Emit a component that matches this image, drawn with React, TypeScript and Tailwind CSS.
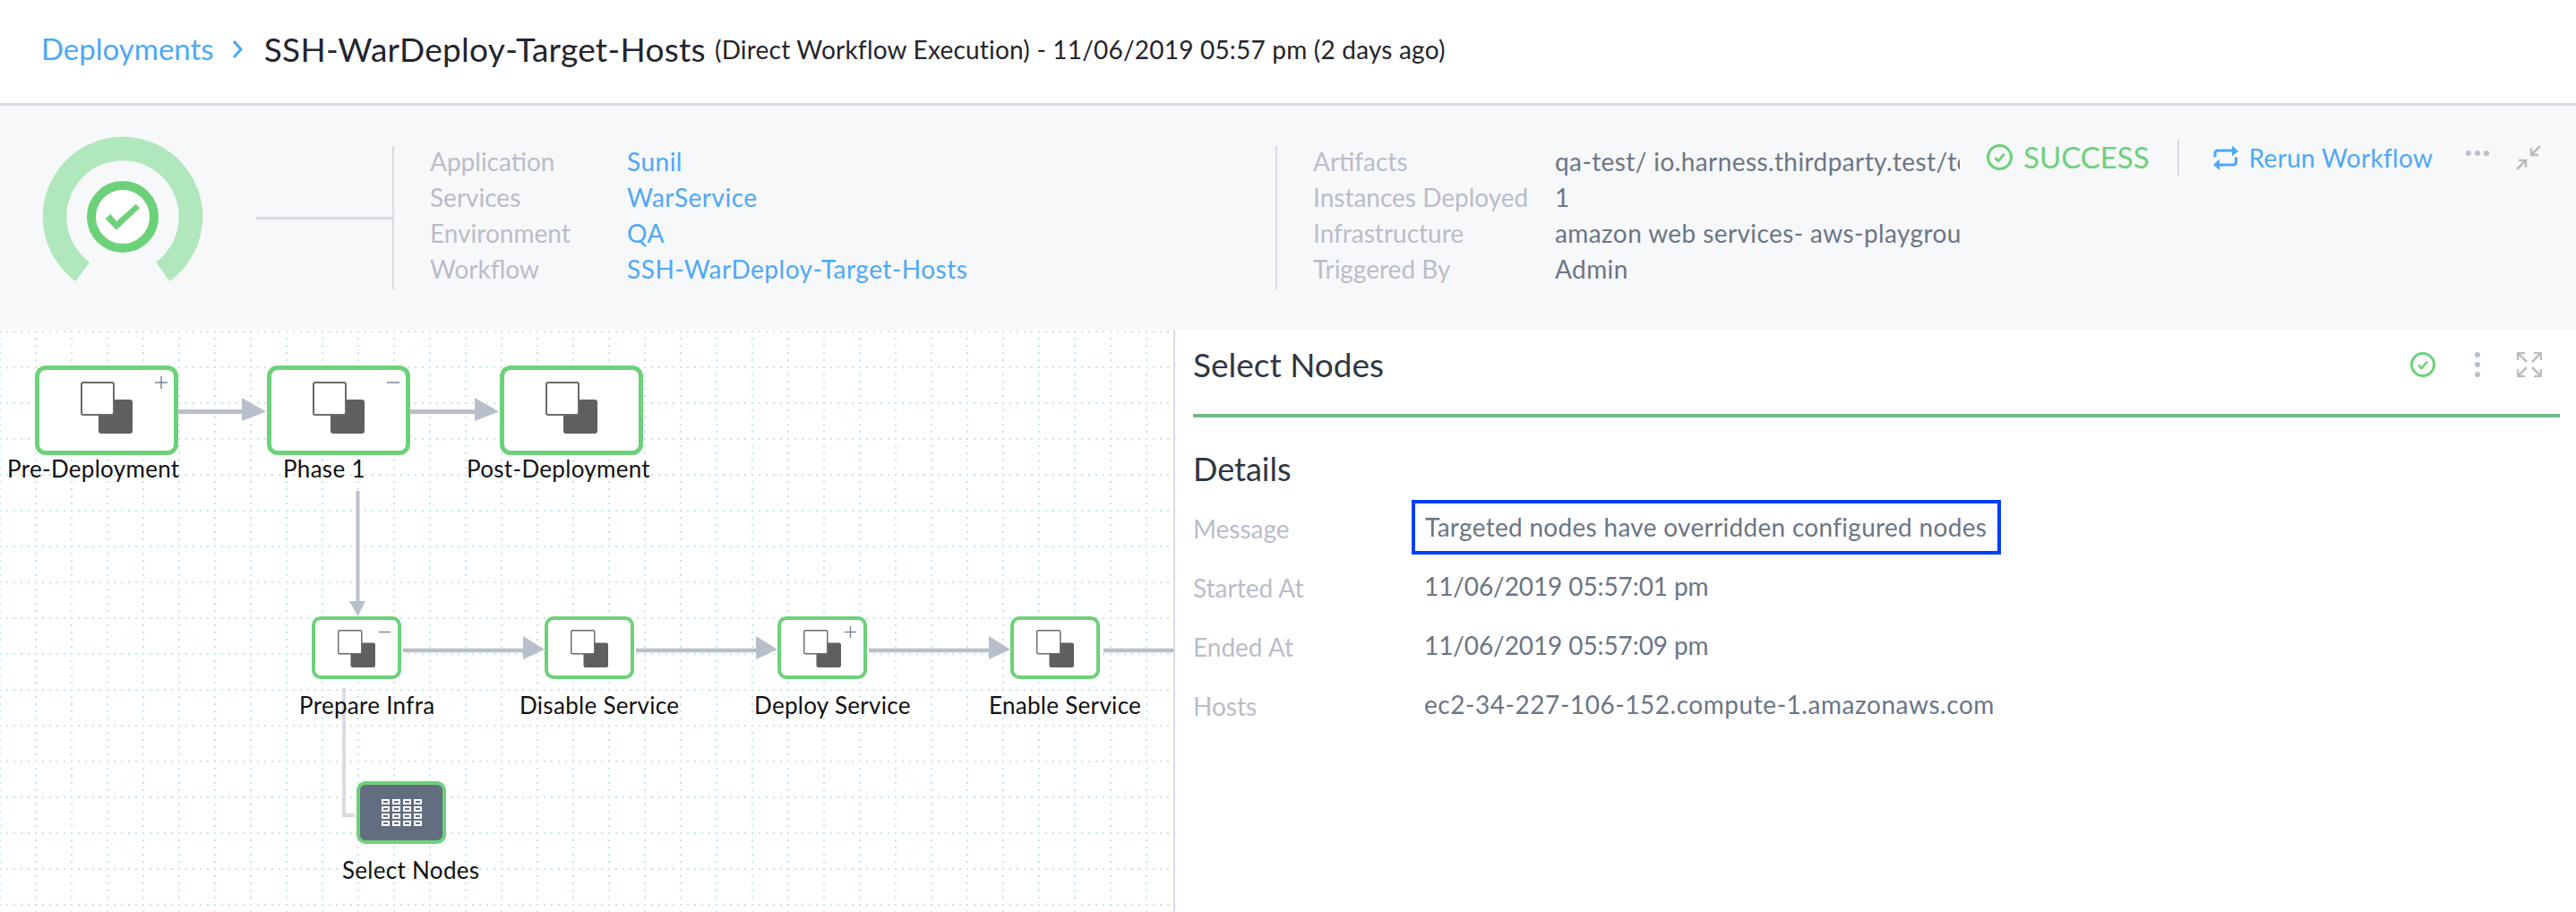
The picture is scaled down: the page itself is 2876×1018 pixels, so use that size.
import React from "react";

const infoLeft = [
  ["Application", "Sunil"],
  ["Services", "WarService"],
  ["Environment", "QA"],
  ["Workflow", "SSH-WarDeploy-Target-Hosts"],
];

const infoRight = [
  ["Artifacts", "qa-test/ io.harness.thirdparty.test/todolist-1.0.war (Build# 1)"],
  ["Instances Deployed", "1"],
  ["Infrastructure", "amazon web services- aws-playground-us-east-1"],
  ["Triggered By", "Admin"],
];

const bigNodes = [
  { pos: "left-[39px]", sign: "+" },
  { pos: "left-[298px]", sign: "-" },
  { pos: "left-[558px]", sign: "" },
];

const smallNodes = [
  { pos: "left-[348px]", sign: "-" },
  { pos: "left-[608px]", sign: "" },
  { pos: "left-[868px]", sign: "+" },
  { pos: "left-[1128px]", sign: "" },
];

const labels = [
  { text: "Pre-Deployment", pos: "left-[8px] top-[137px]" },
  { text: "Phase 1", pos: "left-[316px] top-[137px]" },
  { text: "Post-Deployment", pos: "left-[521px] top-[137px]" },
  { text: "Prepare Infra", pos: "left-[334px] top-[401px]" },
  { text: "Disable Service", pos: "left-[580px] top-[401px]" },
  { text: "Deploy Service", pos: "left-[842px] top-[401px]" },
  { text: "Enable Service", pos: "left-[1104px] top-[401px]" },
  { text: "Select Nodes", pos: "left-[382px] top-[585px]" },
];

const details = [
  ["Started At", "11/06/2019 05:57:01 pm", "tracking-[-0.1px]"],
  ["Ended At", "11/06/2019 05:57:09 pm", "tracking-[-0.1px]"],
  ["Hosts", "ec2-34-227-106-152.compute-1.amazonaws.com", "tracking-[0.55px]"],
];

function StackIcon({ className }: { className: string }) {
  return (
    <svg viewBox="0 0 58 58" className={className}>
      <rect x="20" y="20" width="38" height="38" rx="3" fill="#5f5f5f" />
      <rect x="1" y="1" width="36" height="36" rx="2" fill="#fff" stroke="#6a6a6a" strokeWidth="2" />
    </svg>
  );
}

function CheckCircle({ className }: { className: string }) {
  return (
    <svg viewBox="0 0 28 28" className={className} fill="none">
      <circle cx="14" cy="14" r="12.5" stroke="#6dd17a" strokeWidth="3" />
      <path d="M9 14.5l3.6 3.6L19 10.5" stroke="#6dd17a" strokeWidth="2.6" />
    </svg>
  );
}

function Sign({ sign, className }: { sign: string; className: string }) {
  if (!sign) return null;
  return (
    <svg viewBox="0 0 14 14" className={className} stroke="#6f7c96" strokeWidth="1.4">
      <path d="M0 7h14" />
      {sign === "+" && <path d="M7 0v14" />}
    </svg>
  );
}

function GraphLines() {
  return (
    <svg className="absolute inset-0 w-full h-full" fill="none">
      <defs>
        <pattern id="dots" x="39" y="1" width="40" height="40" patternUnits="userSpaceOnUse">
          <g fill="#bfe6f1">
            <rect x="0" y="0" width="2" height="2" />
            <rect x="8" y="0" width="2" height="2" />
            <rect x="16" y="0" width="2" height="2" />
            <rect x="24" y="0" width="2" height="2" />
            <rect x="32" y="0" width="2" height="2" />
            <rect x="0" y="8" width="2" height="2" />
            <rect x="0" y="16" width="2" height="2" />
            <rect x="0" y="24" width="2" height="2" />
            <rect x="0" y="32" width="2" height="2" />
          </g>
        </pattern>
      </defs>
      <rect width="100%" height="100%" fill="url(#dots)" />
      <g stroke="#b9bfca">
        <path d="M197 91.5H272" strokeWidth="5" />
        <path d="M458 91.5H532" strokeWidth="5" />
        <path d="M399.5 180V306" strokeWidth="4" />
        <path d="M450 358H586" strokeWidth="4.500" />
        <path d="M710 358H846" strokeWidth="4.500" />
        <path d="M970 358H1106" strokeWidth="4.500" />
        <path d="M1232 358H1310" strokeWidth="4.500" />
      </g>
      <g fill="#b9bfca">
        <path d="M270 76L297 91.5L270 102Z" />
        <path d="M530 76L557 91.5L530 102Z" />
        <path d="M390 303H408L399.5 320Z" />
        <path d="M584 342L608 357L584 368Z" />
        <path d="M844 342L868 357L844 368Z" />
        <path d="M1104 342L1128 357L1104 368Z" />
      </g>
      <path d="M384 400V542H396" stroke="#d9dae5" strokeWidth="4" />
    </svg>
  );
}

export default function App() {
  return (
    <div className="w-[2876px] h-[1018px] overflow-hidden bg-white flex flex-col font-[Lato,sans-serif]">
      <div className="h-[118px] shrink-0 border-b-[3px] border-[#d9dae5] flex items-center pl-[46px] pb-[6px] text-[#23252d]">
        <span className="text-[33px] text-[#4da8f5]">Deployments</span>
        <svg viewBox="0 0 12 22" className="w-[12px] h-[22px] ml-[20px] mr-[24px]" fill="none" stroke="#4da8f5" strokeWidth="3">
          <path d="M2 2l8 9-8 9" />
        </svg>
        <span className="text-[37px] tracking-[0.3px]">SSH-WarDeploy-Target-Hosts</span>
        <span className="text-[28px] tracking-[0.2px] ml-[10px]">(Direct Workflow Execution) - 11/06/2019 05:57 pm (2 days ago)</span>
      </div>

      <div className="h-[250px] shrink-0 bg-[#f7f8fa] flex items-center text-[28px] relative">
        <svg viewBox="0 0 180 170" className="w-[180px] h-[170px] ml-[47px] self-start mt-[34px] shrink-0" fill="none">
          <path d="M45.2 151.3A76 76 0 1 1 134.8 151.3" stroke="#b0e7bc" strokeWidth="26.5" />
          <circle cx="90" cy="90" r="35" fill="#fff" stroke="#6dd17a" strokeWidth="10" />
          <path d="M70.7 92.3L83 104.7L109 80.3L104.7 75.7L83 95.3L76.3 87Z" fill="#6dd17a" />
        </svg>
        <div className="w-[152px] h-[3px] ml-[59px] bg-[#d9dae5] shrink-0" />
        <div className="w-[986px] h-[160px] border-l-2 border-[#d9dae5] pl-[40px] shrink-0">
          <div className="-mt-[3px]">
            {infoLeft.map(([k, v]) => (
              <div key={k} className="flex h-[40px] items-center">
                <span className="w-[220px] text-[#b9bdc9]">{k}</span>
                <span className="text-[#4da8f5] tracking-[0.5px]">{v}</span>
              </div>
            ))}
          </div>
        </div>
        <div className="h-[160px] border-l-2 border-[#d9dae5] pl-[40px] shrink-0">
          <div className="-mt-[3px]">
            {infoRight.map(([k, v]) => (
              <div key={k} className="flex h-[40px] items-center">
                <span className="w-[270px] text-[#b9bdc9] whitespace-nowrap">{k}</span>
                <span className="w-[452px] text-[#6b7585] tracking-[0.4px] whitespace-nowrap overflow-hidden">{v}</span>
              </div>
            ))}
          </div>
        </div>
        <div className="flex items-center self-start mt-[33px] ml-[30px]">
          <CheckCircle className="w-[29px] h-[29px]" />
          <span className="text-[33px] text-[#6dd17a] ml-[12px]">SUCCESS</span>
          <div className="w-[2px] h-[40px] bg-[#d9dae5] ml-[31px]" />
          <svg viewBox="0 0 28 28" className="w-[28px] h-[28px] ml-[38px]" fill="none" stroke="#4da8f5" strokeWidth="3">
            <path d="M2 13.500V9a3 3 0 0 1 3-3h17" />
            <path d="M25.500 13.500V19a3 3 0 0 1-3 3H6" />
            <path d="M21 0.500L28 6.500L21 12.500Z" fill="#4da8f5" stroke="none" />
            <path d="M7 15.500L0 22L7 28Z" fill="#4da8f5" stroke="none" />
          </svg>
          <span className="text-[#4da8f5] tracking-[0.3px] ml-[12px]">Rerun Workflow</span>
          <div className="flex gap-[4px] ml-[37px] -mt-[10px]">
            <span className="w-[6px] h-[6px] rounded-full bg-[#b9bfca]" />
            <span className="w-[6px] h-[6px] rounded-full bg-[#b9bfca]" />
            <span className="w-[6px] h-[6px] rounded-full bg-[#b9bfca]" />
          </div>
          <svg viewBox="0 0 28 28" className="w-[28px] h-[28px] ml-[30px]" fill="none" stroke="#bdbdbd" strokeWidth="2.500">
            <path d="M27 1L17 11M17 3v8h8" />
            <path d="M1 27L11 17M3 17h8v8" />
          </svg>
        </div>
      </div>

      <div className="flex-1 flex min-h-0">
        <div className="w-[1310px] shrink-0 relative overflow-hidden bg-white">
          <GraphLines />
          {bigNodes.map((n) => (
            <div key={n.pos} className={"absolute top-[40px] w-[160px] h-[100px] bg-white border-[5px] border-[#6dd17a] rounded-[12px] " + n.pos}>
              <StackIcon className="absolute left-[46px] top-[13px] w-[58px] h-[58px]" />
              <Sign sign={n.sign} className="absolute right-[7px] top-[7px] w-[14px] h-[14px]" />
            </div>
          ))}
          {smallNodes.map((n) => (
            <div key={n.pos} className={"absolute top-[320px] w-[100px] h-[70px] bg-white border-[4px] border-[#6dd17a] rounded-[10px] " + n.pos}>
              <StackIcon className="absolute left-[25px] top-[11px] w-[42px] h-[42px]" />
              <Sign sign={n.sign} className="absolute right-[8px] top-[7px] w-[13px] h-[13px]" />
            </div>
          ))}
          <div className="absolute left-[398px] top-[504px] w-[100px] h-[70px] bg-[#626e80] border-[4px] border-[#6dd17a] rounded-[10px] flex items-center justify-center">
            <div className="grid grid-cols-4 gap-x-[3px] gap-y-[2px]">
              {Array.from({ length: 16 }).map((_, i) => (
                <span key={i} className="w-[9px] h-[6px] border-2 border-white" />
              ))}
            </div>
          </div>
          {labels.map((l) => (
            <span key={l.text} className={"absolute text-[26px] tracking-[0.3px] leading-[36px] text-[#111] whitespace-nowrap " + l.pos}>
              {l.text}
            </span>
          ))}
        </div>

        <div className="flex-1 border-l-2 border-[#d9dae5] bg-white pl-[20px] pr-[18px] min-w-0">
          <div className="h-[94px] flex items-center pb-[16px]">
            <span className="text-[37px] text-[#2f3742]">Select Nodes</span>
            <CheckCircle className="w-[28px] h-[28px] ml-auto" />
            <svg viewBox="0 0 6 28" className="w-[6px] h-[28px] ml-[44px]" fill="#b9bfca">
              <circle cx="3" cy="3" r="3" />
              <circle cx="3" cy="14" r="3" />
              <circle cx="3" cy="25" r="3" />
            </svg>
            <svg viewBox="0 0 28 28" className="w-[28px] h-[28px] ml-[41px] mr-[20px]" fill="none" stroke="#bdbdbd" strokeWidth="2.500">
              <path d="M11 11L1 1M1 9V1h8" />
              <path d="M17 11L27 1M19 1h8v8" />
              <path d="M11 17L1 27M1 19v8h8" />
              <path d="M17 17l10 10M27 19v8h-8" />
            </svg>
          </div>
          <div className="h-[4px] bg-[#75b989]" />
          <div className="text-[36px] leading-[40px] text-[#2f3742] pt-[37px] pb-[12px]">Details</div>
          <div className="text-[28px]">
            <div className="flex h-[66px] items-center">
              <span className="w-[258px] text-[#b9bdc9] mt-[4px]">Message</span>
              <span className="w-[658px] h-[61px] -ml-[14px] pl-[11px] flex items-center border-4 border-[#0040ff] text-[#6b7585] tracking-[0.3px] whitespace-nowrap">
                Targeted nodes have overridden configured nodes
              </span>
            </div>
            {details.map(([k, v, t]) => (
              <div key={k} className="flex h-[66px] items-center">
                <span className="w-[258px] text-[#b9bdc9] mt-[4px]">{k}</span>
                <span className={"text-[#6b7585] whitespace-nowrap " + t}>{v}</span>
              </div>
            ))}
          </div>
        </div>
      </div>
    </div>
  );
}
